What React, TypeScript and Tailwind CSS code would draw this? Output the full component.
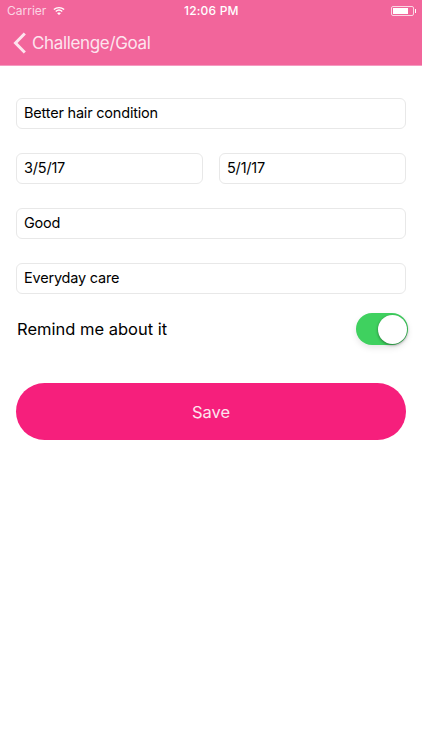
function Field({ text, className = "" }: { text: string; className?: string }) {
  return (
    <div className={`h-[31px] flex items-center px-[7px] pb-[1px] rounded-[6px] border border-[#e8e8e8] bg-white text-[14.5px] text-black tracking-[-0.2px] ${className}`}>
      {text}
    </div>
  );
}

export default function App() {
  return (
    <div className="w-[422px] h-[750px] bg-white overflow-hidden" style={{ fontFamily: 'Inter, "Noto Sans", sans-serif' }}>
      <div className="h-[66px] bg-[#f2659b] border-b border-[#f59ac0] text-white">
        <div className="relative h-[21px] flex items-center justify-between pl-[7px] pr-[6px]">
          <div className="flex items-center gap-[7px] text-[12px] text-[#fbd5e4]">
            <span>Carrier</span>
            <svg width="12" height="10" viewBox="0 0 14 11" fill="none">
              <path d="M1 3.8C4.4.7 9.6.7 13 3.8" stroke="white" strokeWidth="1.5" />
              <path d="M3.2 6C5.4 4.1 8.6 4.1 10.8 6" stroke="white" strokeWidth="1.5" />
              <path d="M5.2 8C6.2 7.2 7.8 7.2 8.8 8L7 10Z" fill="white" stroke="white" strokeWidth="0.6" />
            </svg>
          </div>
          <span className="absolute left-[184px] top-[3px] text-[12px] font-medium leading-[15px] tracking-[0.2px]">12:06 PM</span>
          <div className="flex items-center">
            <div className="w-[23px] h-[10px] rounded-[2px] border border-[#fbd5e4] p-px">
              <div className="w-[15px] h-full bg-white" />
            </div>
            <div className="w-px h-[4px] bg-white ml-px" />
          </div>
        </div>
        <div className="h-[44px] flex items-center pl-[13px]">
          <svg width="14" height="22" viewBox="0 0 14 22" fill="none">
            <path d="M11.800 1.500L2.500 11l9.300 9.500" stroke="#fde4ee" strokeWidth="3" />
          </svg>
          <span className="ml-[5px] pt-[2px] text-[17px] tracking-[-0.35px] text-[#fde4ee]">Challenge/Goal</span>
        </div>
      </div>

      <div className="px-4 pt-8 flex flex-col gap-6">
        <Field text="Better hair condition" />
        <div className="flex gap-4">
          <Field text="3/5/17" className="flex-1" />
          <Field text="5/1/17" className="flex-1" />
        </div>
        <Field text="Good" />
        <Field text="Everyday care" />
      </div>

      <div className="pl-[17px] pr-[14px] mt-[19px] h-[32px] flex items-center justify-between">
        <span className="text-[16.500px] text-black">Remind me about it</span>
        <div className="w-[52px] h-[32px] rounded-full bg-[#3fd15f] flex items-center justify-end pr-[1px] shadow-[0_3px_6px_rgba(0,0,0,0.1)]">
          <div className="w-[29px] h-[29px] rounded-full bg-white shadow-[0_1px_3px_rgba(0,0,0,0.45)]" />
        </div>
      </div>

      <div className="mx-4 mt-[38px] h-[57px] rounded-full bg-[#f61f7c] flex items-center justify-center pt-[2px] text-[16.500px] text-[#fde4ee]">
        Save
      </div>
    </div>
  );
}
